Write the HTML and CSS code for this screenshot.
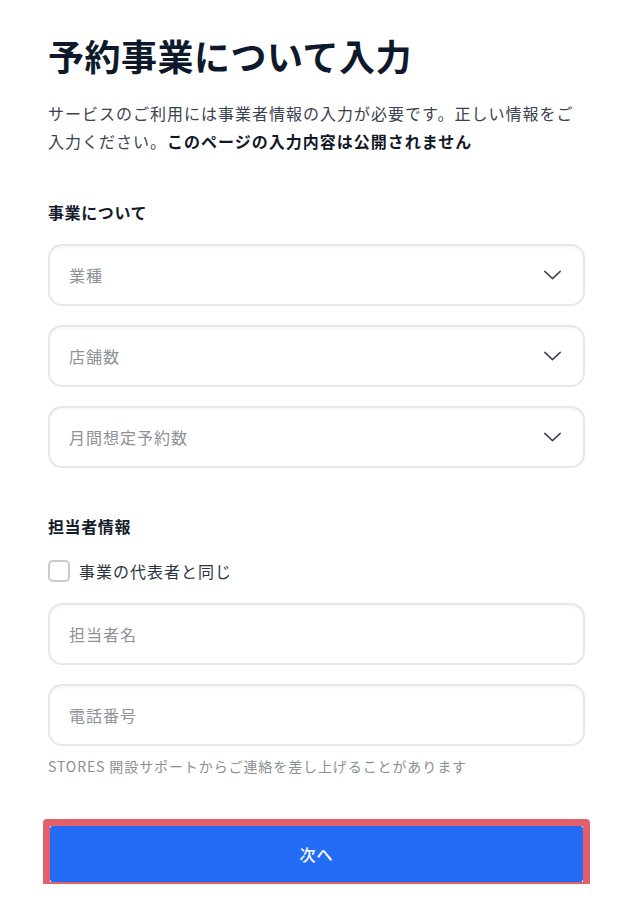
FILE: index.html
```html
<!DOCTYPE html>
<html lang="ja">
<head>
<meta charset="utf-8">
<title>予約事業について入力</title>
<link rel="stylesheet" href="styles.css">
</head>
<body>
<main class="page">
  <h1 class="title">予約事業について入力</h1>
  <p class="lead">サービスのご利用には事業者情報の入力が必要です。正しい情報をご入力ください。<strong>このページの入力内容は公開されません</strong></p>

  <h2 class="section-title">事業について</h2>
  <div class="fields">
    <div class="select">
      <span class="placeholder">業種</span>
      <svg class="chevron" viewBox="0 0 20 11" width="19" height="10"><path d="M1.5 1.5 L10 9.5 L18.5 1.5" fill="none" stroke="#394150" stroke-width="1.6" stroke-linecap="round" stroke-linejoin="round"/></svg>
    </div>
    <div class="select">
      <span class="placeholder">店舗数</span>
      <svg class="chevron" viewBox="0 0 20 11" width="19" height="10"><path d="M1.5 1.5 L10 9.5 L18.5 1.5" fill="none" stroke="#394150" stroke-width="1.6" stroke-linecap="round" stroke-linejoin="round"/></svg>
    </div>
    <div class="select">
      <span class="placeholder">月間想定予約数</span>
      <svg class="chevron" viewBox="0 0 20 11" width="19" height="10"><path d="M1.5 1.5 L10 9.5 L18.5 1.5" fill="none" stroke="#394150" stroke-width="1.6" stroke-linecap="round" stroke-linejoin="round"/></svg>
    </div>
  </div>

  <h2 class="section-title section-title--second">担当者情報</h2>
  <label class="check-row">
    <span class="checkbox"></span>
    <span class="check-label">事業の代表者と同じ</span>
  </label>
  <div class="fields fields--contact">
    <div class="input"><span class="placeholder">担当者名</span></div>
    <div class="input"><span class="placeholder">電話番号</span></div>
  </div>
  <p class="note">STORES 開設サポートからご連絡を差し上げることがあります</p>

  <div class="button-wrap">
    <button class="next-button" type="button">次へ</button>
    <span class="highlight"></span>
  </div>
</main>
</body>
</html>
```

FILE: styles.css
```css
* {
  box-sizing: border-box;
}

html, body {
  margin: 0;
  background: #ffffff;
}

body {
  font-family: "Noto Sans CJK JP", "Noto Sans", sans-serif;
  color: #1b2333;
}

.page {
  width: 632px;
  padding: 30px 47px 0 48px;
}

.title {
  margin: 0;
  font-size: 36px;
  line-height: 50px;
  font-weight: 700;
  color: #0e1a2c;
  letter-spacing: 0.5px;
}

.lead {
  margin: 19px 0 0 0;
  font-size: 16px;
  line-height: 28px;
  letter-spacing: 1px;
  color: #3a4150;
}

.lead strong {
  font-weight: 700;
  color: #111827;
}

.section-title {
  margin: 45px 0 0 0;
  font-size: 16px;
  line-height: 24px;
  font-weight: 700;
  letter-spacing: 0.6px;
  color: #141c2b;
}

.section-title--second {
  margin-top: 46px;
}

.fields {
  margin-top: 20px;
  display: flex;
  flex-direction: column;
  gap: 19px;
}

.select,
.input {
  height: 62px;
  border: 2px solid #e7e8e4;
  border-radius: 14px;
  box-shadow: inset 0 2px 3px rgba(0, 0, 0, 0.035);
  display: flex;
  align-items: center;
  justify-content: space-between;
  padding: 0 21px 0 19px;
  background: #ffffff;
}

.placeholder {
  font-size: 16px;
  letter-spacing: 1px;
  color: #8c9297;
}

.chevron {
  display: block;
}

.check-row {
  margin-top: 21px;
  height: 24px;
  display: flex;
  align-items: center;
  gap: 9px;
}

.checkbox {
  width: 22px;
  height: 22px;
  border: 2px solid #c9cdca;
  border-radius: 5px;
  background: #ffffff;
}

.check-label {
  font-size: 16px;
  letter-spacing: 1px;
  color: #2b3342;
}

.fields--contact {
  margin-top: 20px;
}

.note {
  margin: 10px 0 0 0;
  font-size: 14px;
  line-height: 20px;
  letter-spacing: 0.9px;
  color: #8a8f94;
}

.button-wrap {
  position: relative;
  margin-top: 48px;
  padding-left: 1px;
  padding-right: 1px;
}

.next-button {
  display: block;
  width: 100%;
  height: 60px;
  border: none;
  border-radius: 8px;
  background: #246cf6;
  color: #ffffff;
  font-family: "Noto Sans CJK JP", "Noto Sans", sans-serif;
  font-size: 16px;
  font-weight: 500;
  letter-spacing: 1px;
}

.highlight {
  position: absolute;
  top: -5px;
  left: -5px;
  right: -5px;
  bottom: -5px;
  border: 7px solid #e3606a;
  border-radius: 4px;
  pointer-events: none;
}
```
